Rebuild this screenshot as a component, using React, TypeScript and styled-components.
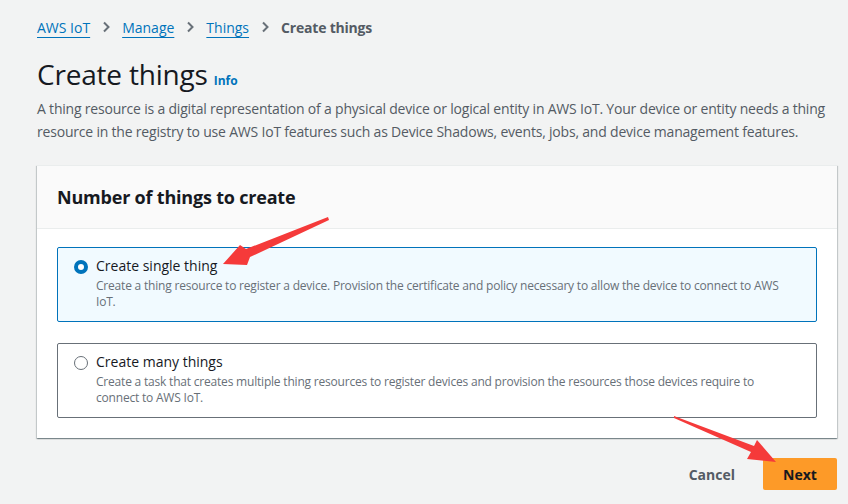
import React from "react";
import styled, { createGlobalStyle } from "styled-components";

const Global = createGlobalStyle`
  html, body { margin: 0; padding: 0; background: #f2f3f3; }
  body { font-family: "Open Sans", "Noto Sans", sans-serif; color: #16191f; }
  * { box-sizing: border-box; }
`;

const Page = styled.div`
  position: relative;
  width: 848px;
  height: 504px;
  padding: 14px 11px 0 37px;
  overflow: hidden;
`;

const Crumbs = styled.nav`
  display: flex;
  align-items: center;
  gap: 10px;
  font-size: 14px;
  height: 26px;
`;

const CrumbLink = styled.a`
  color: #0073bb;
  text-decoration: underline;
  text-underline-offset: 4px;
  text-decoration-thickness: 1px;
`;

const CrumbCurrent = styled.span`
  color: #545b64;
  font-weight: 700;
  letter-spacing: -0.2px;
`;

const Chevron = styled.svg`
  width: 12px;
  height: 12px;
  color: #687078;
`;

const TitleRow = styled.div`
  display: flex;
  align-items: baseline;
  gap: 6px;
  margin-top: 16px;
`;

const Title = styled.h1`
  margin: 0;
  font-size: 28px;
  font-weight: 400;
  line-height: 36px;
  letter-spacing: -0.2px;
  color: #16191f;
`;

const Info = styled.a`
  font-size: 12px;
  font-weight: 700;
  color: #0073bb;
`;

const Desc = styled.p`
  margin: 5px 0 0;
  font-size: 14px;
  line-height: 23px;
  letter-spacing: -0.2px;
  color: #545b64;
`;

const Panel = styled.section`
  margin-top: 22px;
  background: #fff;
  box-shadow: 0 1px 1px 0 rgba(0, 28, 36, 0.3), 1px 1px 1px 0 rgba(0, 28, 36, 0.15), -1px 1px 1px 0 rgba(0, 28, 36, 0.15);
  border-top: 1px solid #eaeded;
`;

const PanelHeader = styled.header`
  background: #fafafa;
  border-bottom: 1px solid #eaeded;
  padding: 0 20px;
  height: 63px;
  display: flex;
  align-items: center;
`;

const PanelTitle = styled.h2`
  margin: 0;
  font-size: 18px;
  font-weight: 700;
  letter-spacing: -0.2px;
  color: #16191f;
`;

const PanelBody = styled.div`
  padding: 18px 20px 20px;
  display: flex;
  flex-direction: column;
  gap: 21px;
`;

const Option = styled.label<{ $selected?: boolean }>`
  display: flex;
  gap: 8px;
  padding: 9px 16px 9px 16px;
  height: 75px;
  border: 1px solid ${(p) => (p.$selected ? "#0073bb" : "#687078")};
  border-radius: 2px;
  background: ${(p) => (p.$selected ? "#f1faff" : "#fff")};
`;

const Radio = styled.span<{ $checked?: boolean }>`
  flex: none;
  width: 14px;
  height: 14px;
  margin-top: 3px;
  border-radius: 50%;
  border: ${(p) => (p.$checked ? "4px solid #0073bb" : "1.5px solid #687078")};
  background: #fff;
`;

const OptionText = styled.div`
  display: flex;
  flex-direction: column;
`;

const OptionLabel = styled.span`
  font-size: 14px;
  line-height: 18px;
  color: #16191f;
`;

const OptionDesc = styled.span`
  font-size: 12px;
  line-height: 16px;
  letter-spacing: -0.2px;
  color: #687078;
  margin-top: 3px;
`;

const Actions = styled.div`
  display: flex;
  justify-content: flex-end;
  align-items: center;
  gap: 8px;
  margin-top: 20px;
`;

const LinkButton = styled.button`
  border: none;
  background: none;
  font-family: inherit;
  font-size: 14px;
  font-weight: 700;
  color: #545b64;
  padding: 4px 20px;
`;

const PrimaryButton = styled.button`
  border: none;
  border-radius: 2px;
  background: #fd9a28;
  font-family: inherit;
  font-size: 14px;
  font-weight: 700;
  color: #16191f;
  height: 32px;
  width: 74px;
`;

const Annotations = styled.svg`
  position: absolute;
  left: 0;
  top: 0;
  pointer-events: none;
`;

const ChevronIcon = () => (
  <Chevron viewBox="0 0 12 12" fill="none">
    <path d="M4 1.5 L8.5 6 L4 10.5" stroke="currentColor" strokeWidth="2" />
  </Chevron>
);

export default function App() {
  return (
    <>
      <Global />
      <Page>
        <Crumbs>
          <CrumbLink>AWS IoT</CrumbLink>
          <ChevronIcon />
          <CrumbLink>Manage</CrumbLink>
          <ChevronIcon />
          <CrumbLink>Things</CrumbLink>
          <ChevronIcon />
          <CrumbCurrent>Create things</CrumbCurrent>
        </Crumbs>
        <TitleRow>
          <Title>Create things</Title>
          <Info>Info</Info>
        </TitleRow>
        <Desc>
          A thing resource is a digital representation of a physical device or logical entity in AWS IoT. Your device or entity needs a thing resource in the registry to use AWS IoT features such as Device Shadows, events, jobs, and device management features.
        </Desc>
        <Panel>
          <PanelHeader>
            <PanelTitle>Number of things to create</PanelTitle>
          </PanelHeader>
          <PanelBody>
            <Option $selected>
              <Radio $checked />
              <OptionText>
                <OptionLabel>Create single thing</OptionLabel>
                <OptionDesc>
                  Create a thing resource to register a device. Provision the certificate and policy necessary to allow the device to connect to AWS IoT.
                </OptionDesc>
              </OptionText>
            </Option>
            <Option>
              <Radio />
              <OptionText>
                <OptionLabel>Create many things</OptionLabel>
                <OptionDesc>
                  Create a task that creates multiple thing resources to register devices and provision the resources those devices require to connect to AWS IoT.
                </OptionDesc>
              </OptionText>
            </Option>
          </PanelBody>
        </Panel>
        <Actions>
          <LinkButton>Cancel</LinkButton>
          <PrimaryButton>Next</PrimaryButton>
        </Actions>
        <Annotations width="848" height="504" viewBox="0 0 848 504">
          <polygon points="328,217 246,249 240,245 223,264 247,265 250,257 329,220" fill="#f53a3a" />
          <polygon points="674,416 754,446 757,440 776,462 747,459 751,452 674,418" fill="#f53a3a" />
        </Annotations>
      </Page>
    </>
  );
}
